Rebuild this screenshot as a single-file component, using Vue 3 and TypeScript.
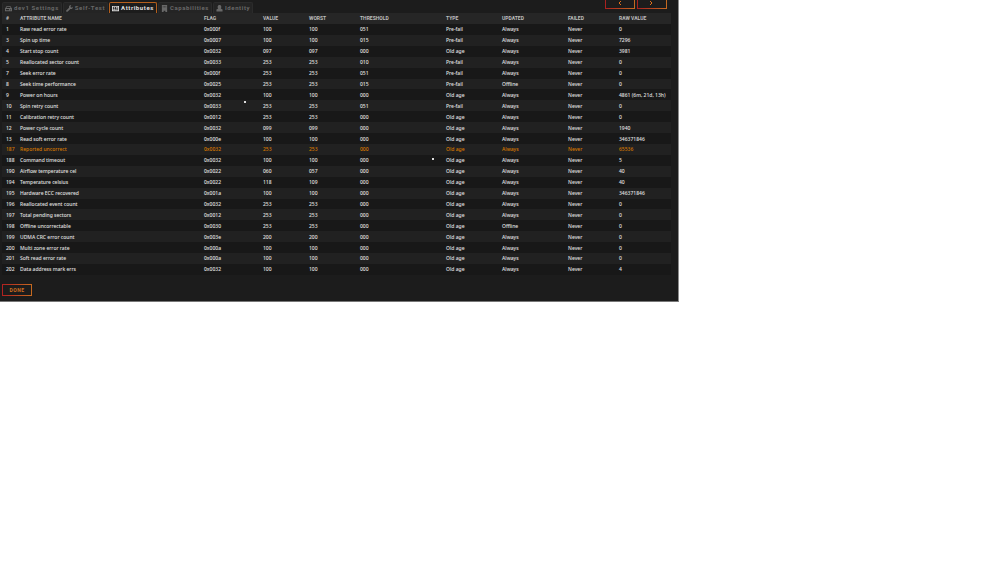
<script setup lang="ts">
import { ref } from 'vue'

interface Tab { id: string; label: string; icon: string }
const tabs: Tab[] = [
  { id: 'settings', label: 'dev1 Settings', icon: 'M4 2h8l4 6v6H0V8zM5 4 3 7h10l-2-3zM2 9v3h7V9zM11 10v2h3v-2z' },
  { id: 'test', label: 'Self-Test', icon: 'M15 4l-3 2-2-2 2-3C9 0 6 2 7 6L1 12c-2 2 1 5 3 3l6-6c4 1 6-2 5-5z' },
  { id: 'attributes', label: 'Attributes', icon: 'M0 2h16v12H0zM2 4v8h12V4zM4 5h3v3H4zM3 9h5v2H3zM9 5h4v2H9zM9 8h4v2H9z' },
  { id: 'capabilities', label: 'Capabilities', icon: 'M2 0h12v16h-4v-3H6v3H2zM4 3v1h2V3zM7 3v1h2V3zM10 3v1h2V3zM4 6v1h2V6zM7 6v1h2V6zM10 6v1h2V6z' },
  { id: 'identity', label: 'Identity', icon: 'M8 0c5 0 5 6 3 8l4 2v5H1v-5l4-2C3 6 3 0 8 0z' },
]
const active = ref('attributes')

const columns = ['#', 'Attribute name', 'Flag', 'Value', 'Worst', 'Threshold', 'Type', 'Updated', 'Failed', 'Raw value']

const rows: string[][] = [
  ['1', 'Raw read error rate', '0x000f', '100', '100', '051', 'Pre-fail', 'Always', 'Never', '0'],
  ['3', 'Spin up time', '0x0007', '100', '100', '015', 'Pre-fail', 'Always', 'Never', '7296'],
  ['4', 'Start stop count', '0x0032', '097', '097', '000', 'Old age', 'Always', 'Never', '3981'],
  ['5', 'Reallocated sector count', '0x0033', '253', '253', '010', 'Pre-fail', 'Always', 'Never', '0'],
  ['7', 'Seek error rate', '0x000f', '253', '253', '051', 'Pre-fail', 'Always', 'Never', '0'],
  ['8', 'Seek time performance', '0x0025', '253', '253', '015', 'Pre-fail', 'Offline', 'Never', '0'],
  ['9', 'Power on hours', '0x0032', '100', '100', '000', 'Old age', 'Always', 'Never', '4861 (6m, 21d, 13h)'],
  ['10', 'Spin retry count', '0x0033', '253', '253', '051', 'Pre-fail', 'Always', 'Never', '0'],
  ['11', 'Calibration retry count', '0x0012', '253', '253', '000', 'Old age', 'Always', 'Never', '0'],
  ['12', 'Power cycle count', '0x0032', '099', '099', '000', 'Old age', 'Always', 'Never', '1940'],
  ['13', 'Read soft error rate', '0x000e', '100', '100', '000', 'Old age', 'Always', 'Never', '346371846'],
  ['187', 'Reported uncorrect', '0x0032', '253', '253', '000', 'Old age', 'Always', 'Never', '65536'],
  ['188', 'Command timeout', '0x0032', '100', '100', '000', 'Old age', 'Always', 'Never', '5'],
  ['190', 'Airflow temperature cel', '0x0022', '060', '057', '000', 'Old age', 'Always', 'Never', '40'],
  ['194', 'Temperature celsius', '0x0022', '118', '109', '000', 'Old age', 'Always', 'Never', '40'],
  ['195', 'Hardware ECC recovered', '0x001a', '100', '100', '000', 'Old age', 'Always', 'Never', '346371846'],
  ['196', 'Reallocated event count', '0x0032', '253', '253', '000', 'Old age', 'Always', 'Never', '0'],
  ['197', 'Total pending sectors', '0x0012', '253', '253', '000', 'Old age', 'Always', 'Never', '0'],
  ['198', 'Offline uncorrectable', '0x0030', '253', '253', '000', 'Old age', 'Offline', 'Never', '0'],
  ['199', 'UDMA CRC error count', '0x003e', '200', '200', '000', 'Old age', 'Always', 'Never', '0'],
  ['200', 'Multi zone error rate', '0x000a', '100', '100', '000', 'Old age', 'Always', 'Never', '0'],
  ['201', 'Soft read error rate', '0x000a', '100', '100', '000', 'Old age', 'Always', 'Never', '0'],
  ['202', 'Data address mark errs', '0x0032', '100', '100', '000', 'Old age', 'Always', 'Never', '4'],
]
const warnings = new Set(['187'])
</script>

<template>
  <main class="panel">
    <header class="top">
      <nav class="tabs" aria-label="Device sections">
        <button
          v-for="tab in tabs"
          :key="tab.id"
          type="button"
          class="tab"
          :class="{ active: active === tab.id }"
          @click="active = tab.id"
        >
          <svg class="icon" viewBox="0 0 16 16" aria-hidden="true"><path :d="tab.icon" fill="currentColor" fill-rule="evenodd" /></svg>
          <span>{{ tab.label }}</span>
        </button>
      </nav>
      <div class="pager">
        <button type="button" class="page" aria-label="Previous device">
          <svg class="chevron" viewBox="0 0 6 6" aria-hidden="true"><path d="M4 0 2 2l2 2" /></svg>
        </button>
        <button type="button" class="page" aria-label="Next device">
          <svg class="chevron" viewBox="0 0 6 6" aria-hidden="true"><path d="M1 0l2 2-2 2" /></svg>
        </button>
      </div>
    </header>

    <table class="attributes">
      <colgroup>
        <col class="c-id"><col class="c-name"><col class="c-flag"><col class="c-value"><col class="c-worst">
        <col class="c-threshold"><col class="c-type"><col class="c-updated"><col class="c-failed"><col>
      </colgroup>
      <thead>
        <tr><th v-for="name in columns" :key="name" scope="col">{{ name }}</th></tr>
      </thead>
      <tbody>
        <tr v-for="row in rows" :key="row[0]" :class="{ warn: warnings.has(row[0]) }">
          <td v-for="(cell, i) in row" :key="i">{{ cell }}</td>
        </tr>
      </tbody>
    </table>

    <button type="button" class="done">Done</button>
    <i class="speck first"></i>
    <i class="speck second"></i>
  </main>
</template>

<style>
body {
  margin: 0;
  background: #fff;
}
</style>

<style scoped>
.panel {
  position: relative;
  box-sizing: border-box;
  width: 100%;
  max-width: 679px;
  padding: 0 7px 5px 2px;
  border-right: 1px solid #8c8c8c;
  border-bottom: 1px solid #777;
  background: #1c1c1c;
  color: #e2e2e2;
  font-family: "Noto Sans", "Open Sans", sans-serif;
  font-size: 5px;
  font-weight: 500;
}
button {
  margin: 0;
  padding: 0;
  font-family: inherit;
  cursor: pointer;
}
.top {
  display: flex;
  justify-content: space-between;
  align-items: flex-start;
}
.tabs {
  display: flex;
  gap: 1px;
  padding-top: 2px;
}
.tab {
  display: flex;
  align-items: center;
  gap: 2px;
  height: 11px;
  padding: 0 2px;
  border: 1px solid #2b2b2b;
  border-bottom: 0;
  border-radius: 2px 2px 0 0;
  background: #242424;
  color: #686868;
  font-family: Roboto, sans-serif;
  font-size: 6px;
  font-weight: 700;
  line-height: 10px;
  letter-spacing: 0.1em;
  white-space: nowrap;
}
.tab.active {
  border-color: #b45f1c;
  background: #1c1c1c;
  color: #e0e0e0;
}
.icon {
  width: 7px;
  height: 7px;
}
.pager {
  display: flex;
  gap: 2px;
  padding-right: 4px;
}
.page {
  display: flex;
  align-items: center;
  justify-content: center;
  box-sizing: border-box;
  width: 30px;
  height: 9px;
  border: 1px solid;
  border-top-width: 0;
  border-image: linear-gradient(90deg, #a82020, #c56a20) 1;
  background: transparent;
  color: #e2701b;
}
.chevron {
  width: 6px;
  height: 6px;
  fill: none;
  stroke: currentColor;
  stroke-width: 1;
}
.attributes {
  width: 100%;
  height: 262px;
  table-layout: fixed;
  border-collapse: collapse;
}
.c-id { width: 18px; }
.c-name { width: 184px; }
.c-flag { width: 59px; }
.c-value { width: 46px; }
.c-worst { width: 51px; }
.c-threshold { width: 86px; }
.c-type { width: 56px; }
.c-updated { width: 66px; }
.c-failed { width: 51px; }
th,
td {
  padding: 0;
  line-height: 10px;
  text-align: left;
  vertical-align: middle;
  white-space: nowrap;
}
th:first-child,
td:first-child {
  padding-left: 4px;
}
th {
  color: #bebebe;
  font-family: Roboto, sans-serif;
  font-weight: 700;
  line-height: 11px;
  text-transform: uppercase;
}
thead tr {
  background: #262626;
}
tbody tr:nth-child(odd) {
  background: #181818;
}
tbody tr:nth-child(even) {
  background: #212121;
}
tbody .warn {
  color: #d87900;
}
.done {
  display: block;
  box-sizing: border-box;
  width: 30px;
  height: 12px;
  margin-top: 9px;
  border: 1px solid;
  border-image: linear-gradient(90deg, #b02020, #c56a20) 1;
  background: transparent;
  color: #d5701f;
  font-family: Roboto, sans-serif;
  font-size: 5px;
  font-weight: 700;
  line-height: 10px;
  letter-spacing: 0.1em;
  text-align: center;
  text-transform: uppercase;
}
.speck {
  position: absolute;
  width: 2px;
  height: 2px;
  background: #ddd;
}
.first {
  top: 101px;
  left: 244px;
}
.second {
  top: 158px;
  left: 432px;
}
</style>
